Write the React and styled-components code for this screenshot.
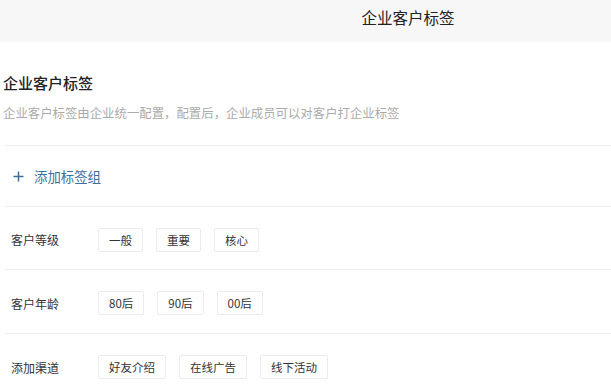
import React from "react";
import styled, { createGlobalStyle } from "styled-components";

const Global = createGlobalStyle`
  html, body { margin: 0; padding: 0; background: #fff; }
  body { font-family: "Noto Sans CJK SC", "Noto Sans", sans-serif; color: #333; }
`;

const Page = styled.div`
  width: 611px;
  height: 389px;
  overflow: hidden;
  background: #fff;
`;

const Header = styled.header`
  height: 42px;
  background: #f7f7f7;
  display: flex;
  justify-content: center;
  align-items: flex-start;
  padding-left: 205px;
  box-sizing: border-box;
`;

const HeaderTitle = styled.h1`
  margin: 7px 0 0;
  font-size: 15.5px;
  line-height: 21px;
  font-weight: 400;
  color: #222;
`;

const Content = styled.main`
  padding-left: 3px;
  display: flex;
  flex-direction: column;
`;

const Heading = styled.h2`
  margin: 31px 0 0;
  font-size: 15px;
  line-height: 20px;
  font-weight: 500;
  color: #222;
`;

const Desc = styled.p`
  margin: 11px 0 0;
  font-size: 12.4px;
  line-height: 18px;
  color: #ababab;
  white-space: nowrap;
`;

const Section = styled.div`
  border-top: 1px solid #f0f0f0;
  margin-left: 2px;
  height: ${(p) => p.$h}px;
  display: flex;
  align-items: center;
  box-sizing: border-box;
  margin-top: ${(p) => p.$mt || 0}px;
  padding-top: ${(p) => p.$pt || 0}px;
`;

const AddButton = styled.div`
  display: flex;
  align-items: center;
  gap: 10px;
  padding-left: 8px;
  color: #3b6f9c;
  font-size: 13.4px;
  line-height: 18px;
`;

const Label = styled.div`
  width: 93px;
  padding-left: 6px;
  font-size: 12px;
  color: #333;
  flex-shrink: 0;
  box-sizing: border-box;
`;

const Tags = styled.div`
  display: flex;
  gap: 13px;
`;

const Tag = styled.div`
  height: 24px;
  padding: 0 10px;
  display: flex;
  align-items: center;
  border: 1px solid #ececec;
  border-radius: 2px;
  box-sizing: border-box;
  font-size: 11.5px;
  color: #333;
  background: #fff;
`;

const groups = [
  { name: "客户等级", tags: ["一般", "重要", "核心"], h: 63 },
  { name: "客户年龄", tags: ["80后", "90后", "00后"], h: 64 },
  { name: "添加渠道", tags: ["好友介绍", "在线广告", "线下活动"], h: 64 },
];

function PlusIcon() {
  return (
    <svg width="11" height="11" viewBox="0 0 11 11">
      <path d="M5.5 0.5V10.5M0.5 5.5H10.5" stroke="#3b6f9c" strokeWidth="1.5" fill="none" />
    </svg>
  );
}

export default function App() {
  return (
    <Page>
      <Global />
      <Header>
        <HeaderTitle>企业客户标签</HeaderTitle>
      </Header>
      <Content>
        <Heading>企业客户标签</Heading>
        <Desc>企业客户标签由企业统一配置，配置后，企业成员可以对客户打企业标签</Desc>
        <Section $h={61} $mt={23}>
          <AddButton>
            <PlusIcon />
            <span>添加标签组</span>
          </AddButton>
        </Section>
        {groups.map((g) => (
          <Section key={g.name} $h={g.h} $pt={3}>
            <Label>{g.name}</Label>
            <Tags>
              {g.tags.map((t) => (
                <Tag key={t}>{t}</Tag>
              ))}
            </Tags>
          </Section>
        ))}
      </Content>
    </Page>
  );
}
